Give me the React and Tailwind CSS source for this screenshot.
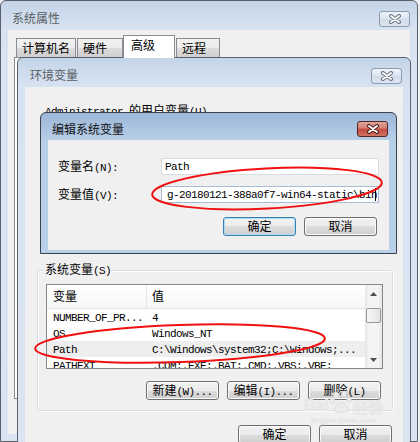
import React from "react";

const CJK = "font-['Noto_Sans_CJK_SC',sans-serif] text-[12px]";
const LAT = "font-['Liberation_Mono','Noto_Sans_CJK_SC',monospace] text-[11px] tracking-[-0.6px]";

const FRAME_INACTIVE = "border-[#5b616b] bg-[linear-gradient(to_bottom,#c4d4e8,#d8e3f1_29px,#dbe5f2)]";
const FRAME_ACTIVE = "border-[#3a424d] bg-[linear-gradient(to_bottom,#9db7d7,#b7cee8_27px,#b9d0ea)]";

// 宋体 look: latin runs get a narrow mono face, cjk runs get Noto
const Txt = ({ children, className = "" }) => {
  const runs = String(children).match(/[\x00-\x7f]+|[^\x00-\x7f]+/g) || [];
  return (
    <span className={`whitespace-pre leading-[12px] ${className}`}>
      {runs.map((r, i) => (
        <span key={i} className={/^[\x00-\x7f]/.test(r) ? LAT : CJK}>
          {r}
        </span>
      ))}
    </span>
  );
};

const CloseBtn = ({ active }) => (
  <div
    className={`w-[31px] h-[16px] rounded-[3px] border flex items-center justify-center ${
      active
        ? "border-[#4f2621] bg-[linear-gradient(to_bottom,#e0a69c,#d17c6f_45%,#c14a3a_50%,#cf7466)]"
        : "border-[#8b9bb0] bg-[linear-gradient(to_bottom,#eef3f9,#dbe4ef_50%,#d1ddeb_50%,#dce5f0)]"
    }`}
  >
    <svg width="14" height="10" viewBox="0 0 14 10">
      <path d="M3 2 L11 8 M11 2 L3 8" stroke={active ? "#4a1a14" : "#6a7380"} strokeWidth="4" strokeLinecap="round" />
      <path d="M3 2 L11 8 M11 2 L3 8" stroke="#fff" strokeWidth="2" strokeLinecap="round" />
    </svg>
  </div>
);

const TitleBar = ({ title, active, cls }) => (
  <div className={`shrink-0 flex items-center justify-between ${cls}`}>
    <Txt className={active ? "text-[#111]" : "text-[#5a5f66]"}>{title}</Txt>
    <CloseBtn active={active} />
  </div>
);

const Btn = ({ children, def }) => (
  <div
    className={`w-[73px] h-[19px] shrink-0 rounded-[3px] border flex items-center justify-center bg-[linear-gradient(to_bottom,#f2f2f2,#ebebeb_50%,#dddddd_50%,#cfcfcf)] ${
      def ? "border-[#3c7fb1] shadow-[inset_0_0_0_1px_#a9dcf6]" : "border-[#707070] shadow-[inset_0_0_0_1px_#fbfbfb]"
    }`}
  >
    <Txt className="text-black">{children}</Txt>
  </div>
);

const Tab = ({ children, sel, w }) => (
  <div
    className={`${w} border border-[#898c95] border-b-0 flex items-center ${
      sel
        ? "h-[23px] -mb-px bg-white relative z-10 pl-[7px] pb-[3px]"
        : "h-[19px] pl-[5px] bg-[linear-gradient(to_bottom,#f2f2f2,#ebebeb_50%,#dddddd_50%,#cfcfcf)]"
    }`}
  >
    <Txt>{children}</Txt>
  </div>
);

const rows = [
  ["NUMBER_OF_PR...", "4"],
  ["OS", "Windows_NT"],
  ["Path", "C:\\Windows\\system32;C:\\Windows;..."],
  ["PATHEXT", ".COM;.EXE;.BAT;.CMD;.VBS;.VBE;"],
];

const Arrow = ({ down }) => (
  <svg width="7" height="4" viewBox="0 0 7 4">
    <path d={down ? "M0 0 H7 L3.5 4 Z" : "M0 4 H7 L3.5 0 Z"} fill="#4d4d4d" />
  </svg>
);

const ListView = () => (
  <div className="w-[337px] h-[85px] border border-[#828790] bg-white flex overflow-hidden">
    <div className="flex-1 flex flex-col overflow-hidden">
      <div className="h-[24px] shrink-0 flex border-b border-[#e5e5e5] bg-[linear-gradient(to_bottom,#ffffff,#f5f6f7)]">
        <div className="w-[100px] pl-[6px] flex items-center border-r border-[#e3e8ee]">
          <Txt>变量</Txt>
        </div>
        <div className="pl-[5px] flex items-center">
          <Txt>值</Txt>
        </div>
      </div>
      {rows.map(([k, v]) => (
        <div key={k} className={`h-[16px] shrink-0 flex items-center ${k === "Path" ? "bg-[#eeeeee]" : ""}`}>
          <div className="w-[100px] pl-[6px]">
            <Txt>{k}</Txt>
          </div>
          <div className="pl-[5px]">
            <Txt>{v}</Txt>
          </div>
        </div>
      ))}
    </div>
    <div className="w-[17px] flex flex-col items-center bg-[linear-gradient(to_right,#e6e6e6,#f4f4f4_25%,#f4f4f4_75%,#e6e6e6)]">
      <div className="h-[17px] flex items-center justify-center">
        <Arrow />
      </div>
      <div className="mt-[6px] w-[15px] h-[15px] rounded-[2px] border border-[#979797] bg-[linear-gradient(to_right,#f7f7f7,#e4e4e4)]" />
      <div className="flex-1" />
      <div className="h-[17px] flex items-center justify-center">
        <Arrow down />
      </div>
    </div>
  </div>
);

export default function App() {
  return (
    <div className="relative w-[420px] h-[442px] overflow-hidden bg-[#f0f0f0] text-[12px] leading-[12px] text-black">
      {/* 系统属性 */}
      <div className={`absolute left-0 top-0 w-[418px] h-[442px] flex flex-col rounded-t-[6px] border ${FRAME_INACTIVE}`}>
        <TitleBar title="系统属性" cls="h-[29px] pt-[6px] pl-[11px] pr-[7px]" />
        <div className="flex-1 mx-[7px] mb-[7px] bg-[#f0f0f0] pt-[5px] px-[6px]">
          <div className="flex items-end h-[22px] pl-[2px]">
            <Tab w="w-[60px]">计算机名</Tab>
            <Tab w="w-[46px] ml-px">硬件</Tab>
            <Tab w="w-[52px]" sel>
              高级
            </Tab>
            <Tab w="w-[44px] ml-px">远程</Tab>
          </div>
          <div className="h-[342px] border border-[#898c95] bg-white" />
        </div>
      </div>

      {/* 环境变量 */}
      <div className={`absolute left-[17px] top-[57px] w-[394px] h-[400px] flex flex-col rounded-t-[6px] border ${FRAME_INACTIVE}`}>
        <TitleBar title="环境变量" cls="h-[29px] pt-[6px] pl-[12px] pr-[8px]" />
        <div className="flex-1 mx-[7px] bg-[#f0f0f0] flex flex-col">
          <Txt className="self-start ml-[20px] mt-[17px]">Administrator 的用户变量(U)</Txt>

          <div className="relative ml-[12px] mt-[152px] w-[356px] h-[141px] border border-[#d5dfe5] rounded-[3px] shadow-[inset_1px_1px_0_#fff,1px_1px_0_#fff] pt-[13px] pl-[8px]">
            <Txt className="absolute left-[6px] -top-[8px] bg-[#f0f0f0] px-px">系统变量(S)</Txt>
            <ListView />
            <div className="flex justify-end gap-[8px] w-[337px] pr-[2px] mt-[12px]">
              <Btn>新建(W)...</Btn>
              <Btn>编辑(I)...</Btn>
              <Btn>删除(L)</Btn>
            </div>
          </div>

          <div className="flex justify-end gap-[8px] pr-[11px] mt-[14px]">
            <Btn>确定</Btn>
            <Btn>取消</Btn>
          </div>
        </div>
      </div>

      {/* 编辑系统变量 */}
      <div className={`absolute left-[40px] top-[112px] w-[357px] h-[142px] flex flex-col rounded-t-[6px] border ${FRAME_ACTIVE}`}>
        <TitleBar title="编辑系统变量" active cls="h-[27px] pt-[5px] pl-[11px] pr-[8px]" />
        <div className="flex-1 mx-[7px] mb-[3px] bg-[#f0f0f0] flex flex-col pl-[10px]">
          <div className="flex items-center mt-[18px]">
            <div className="w-[103px]">
              <Txt>变量名(N):</Txt>
            </div>
            <div className="w-[218px] h-[17px] border border-[#d9dde3] bg-white flex items-center pl-[3px]">
              <Txt>Path</Txt>
            </div>
          </div>
          <div className="flex items-center mt-[11px]">
            <div className="w-[103px]">
              <Txt>变量值(V):</Txt>
            </div>
            <div className="w-[218px] h-[17px] border border-[#a8bed6] bg-white flex items-center pl-[5px] pr-[2px]">
              <div className="flex-1 h-full flex items-center justify-end overflow-hidden">
                <Txt className="shrink-0">ffmpeg-20180121-388a0f7-win64-static\bin</Txt>
              </div>
              <span className="shrink-0 w-px h-[13px] bg-black -ml-[2px]" />
            </div>
          </div>
          <div className="flex gap-[8px] mt-[14px] ml-[165px]">
            <Btn def>确定</Btn>
            <Btn>取消</Btn>
          </div>
        </div>
      </div>

      {/* baidu 经验 watermark */}
      <div className="absolute left-[304px] top-[390px] flex flex-col items-center text-[#e9e9e9] [text-shadow:0_0_1px_#d6d6d6] pointer-events-none">
        <div className="flex items-end gap-[1px] font-['Liberation_Sans',sans-serif] font-bold text-[16px] leading-none">
          <span>Bai</span>
          <svg width="22" height="24" viewBox="0 0 22 24">
            <g fill="#ebebeb" stroke="#d8d8d8" strokeWidth="0.8">
              <ellipse cx="6" cy="5" rx="2.5" ry="3" />
              <ellipse cx="14" cy="4" rx="2.5" ry="3" />
              <ellipse cx="2.5" cy="11" rx="2.2" ry="2.6" />
              <ellipse cx="19" cy="10" rx="2.2" ry="2.6" />
              <path d="M4 21 Q4 14 11 12 Q18 14 18 21 Q11 24 4 21 Z" />
            </g>
          </svg>
          <span className="font-['Noto_Sans_CJK_SC',sans-serif] text-[15px]">经验</span>
        </div>
        <span className="font-['Liberation_Sans',sans-serif] text-[8px] leading-none mt-[3px]">jingyan.baidu.com</span>
      </div>

      {/* red annotation ellipses */}
      <svg className="absolute left-0 top-0 pointer-events-none" width="420" height="442" viewBox="0 0 420 442">
        <ellipse cx="267" cy="188.5" rx="115" ry="20" fill="none" stroke="#f01010" strokeWidth="2" transform="rotate(-3 267 188.5)" />
        <ellipse cx="180" cy="343.5" rx="145" ry="18.5" fill="none" stroke="#f01010" strokeWidth="2" transform="rotate(-2 180 343.5)" />
      </svg>
    </div>
  );
}
